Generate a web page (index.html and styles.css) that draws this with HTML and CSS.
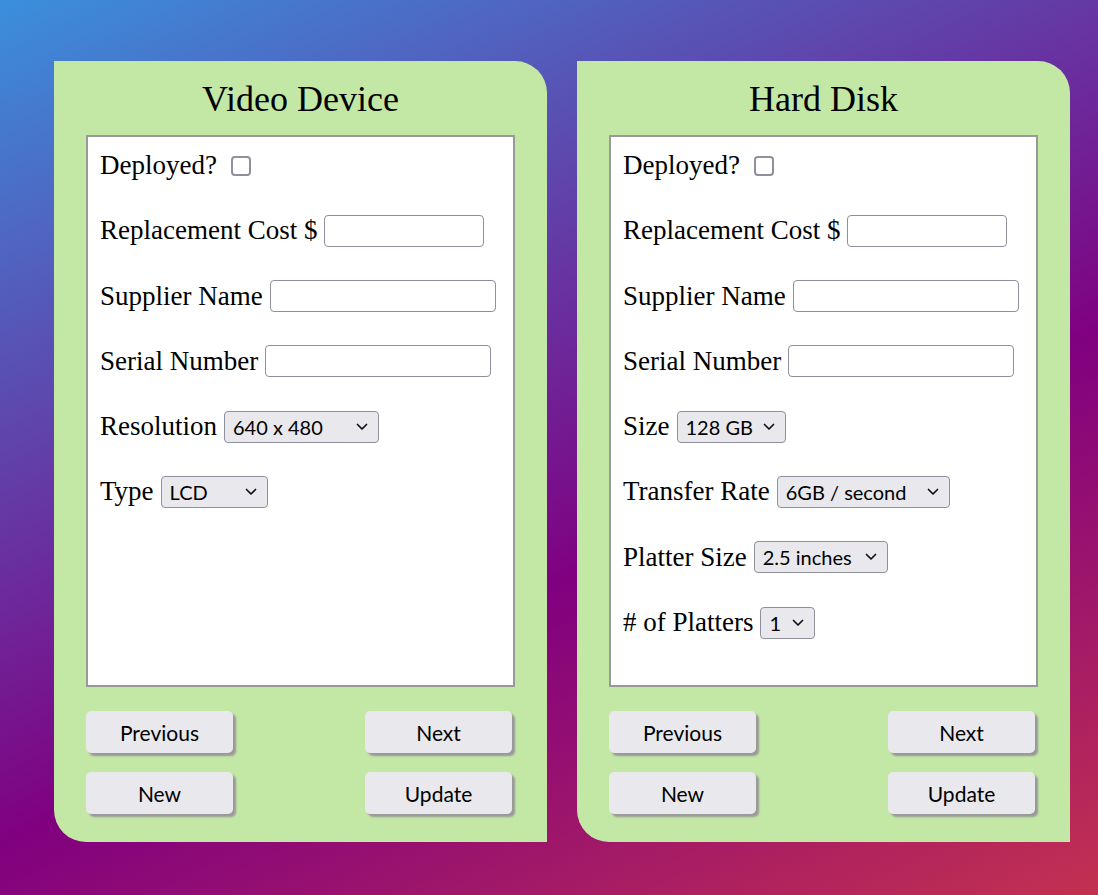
FILE: index.html
```html
<!DOCTYPE html>
<html lang="en">
<head>
<meta charset="utf-8">
<title>Inventory</title>
<link rel="stylesheet" href="styles.css">
</head>
<body>
<main class="page">
  <section class="card">
    <h2 class="card-title">Video Device</h2>
    <div class="panel">
      <div class="row"><label>Deployed?</label><input type="checkbox" class="check"></div>
      <div class="row"><label>Replacement Cost $</label><input type="text" class="field w-cost"></div>
      <div class="row"><label>Supplier Name</label><input type="text" class="field w-long"></div>
      <div class="row"><label>Serial Number</label><input type="text" class="field w-long"></div>
      <div class="row"><label>Resolution</label><select class="sel w-res"><option>640 x 480</option></select></div>
      <div class="row"><label>Type</label><select class="sel w-type"><option>LCD</option></select></div>
    </div>
    <div class="buttons">
      <button class="btn">Previous</button>
      <button class="btn">Next</button>
      <button class="btn">New</button>
      <button class="btn">Update</button>
    </div>
  </section>
  <section class="card">
    <h2 class="card-title">Hard Disk</h2>
    <div class="panel">
      <div class="row"><label>Deployed?</label><input type="checkbox" class="check"></div>
      <div class="row"><label>Replacement Cost $</label><input type="text" class="field w-cost"></div>
      <div class="row"><label>Supplier Name</label><input type="text" class="field w-long"></div>
      <div class="row"><label>Serial Number</label><input type="text" class="field w-long"></div>
      <div class="row"><label>Size</label><select class="sel w-size"><option>128 GB</option></select></div>
      <div class="row"><label>Transfer Rate</label><select class="sel w-rate"><option>6GB / second</option></select></div>
      <div class="row"><label>Platter Size</label><select class="sel w-platter"><option>2.5 inches</option></select></div>
      <div class="row"><label># of Platters</label><select class="sel w-count"><option>1</option></select></div>
    </div>
    <div class="buttons">
      <button class="btn">Previous</button>
      <button class="btn">Next</button>
      <button class="btn">New</button>
      <button class="btn">Update</button>
    </div>
  </section>
</main>
</body>
</html>
```
FILE: styles.css
```css
html {
  min-height: 100%;
  background: linear-gradient(155deg, #3b8fdc 0%, #800080 60%, #c33150 100%);
}
body {
  margin: 0;
  font-family: "Liberation Serif", "Times New Roman", serif;
  color: #000;
}
.page {
  display: flex;
  gap: 30px;
  padding: 61px 0 0 54px;
}
.card {
  box-sizing: border-box;
  width: 493px;
  padding: 16px 32px 28px 32px;
  background: #c3e7a4;
  border-radius: 0 32px 0 32px;
}
.card-title {
  margin: 0;
  font-size: 36px;
  font-weight: normal;
  line-height: 44px;
  text-align: center;
}
.panel {
  box-sizing: border-box;
  margin-top: 14px;
  height: 552px;
  background: #fff;
  border: 2px solid #999;
  padding: 12px 12px 0 12px;
  display: flex;
  flex-direction: column;
  gap: 32.3px;
}
.row {
  display: flex;
  align-items: center;
  gap: 7px;
  height: 33px;
  font-size: 27px;
  white-space: nowrap;
}
.check {
  appearance: none;
  -webkit-appearance: none;
  box-sizing: border-box;
  width: 20px;
  height: 20px;
  margin: 0 0 0 7px;
  border: 2px solid #8f8f9d;
  border-radius: 4px;
  background: #fff;
}
.field {
  box-sizing: border-box;
  height: 32px;
  margin: 0;
  border: 1px solid #8f8f9d;
  border-radius: 4px;
  background: #fff;
  font-family: Lato, sans-serif;
  font-size: 20px;
  padding: 0 6px;
}
.w-cost { width: 160px; }
.w-long { width: 226px; }
.sel {
  appearance: none;
  -webkit-appearance: none;
  box-sizing: border-box;
  height: 32px;
  margin: 0;
  border: 1px solid #8f8f9d;
  border-radius: 4px;
  padding: 0 0 0 8px;
  font-family: Lato, sans-serif;
  font-size: 20px;
  color: #000;
  background-color: #e9e9ed;
  background-image: url("data:image/svg+xml,%3Csvg xmlns='http://www.w3.org/2000/svg' width='12' height='8' viewBox='0 0 12 8'%3E%3Cpath d='M1.5 1.5l4.5 4.5 4.5-4.5' fill='none' stroke='%23111' stroke-width='1.7' stroke-linecap='round' stroke-linejoin='round'/%3E%3C/svg%3E");
  background-repeat: no-repeat;
  background-position: right 10px center;
  background-size: 12px 8px;
}
.w-res { width: 155px; }
.w-type { width: 107px; }
.w-size { width: 109px; }
.w-rate { width: 173px; }
.w-platter { width: 134px; }
.w-count { width: 55px; }
.buttons {
  display: grid;
  grid-template-columns: 147px 147px;
  justify-content: space-between;
  row-gap: 19px;
  margin: 24px 3px 0 0;
}
.btn {
  box-sizing: border-box;
  height: 42px;
  margin: 0;
  border: none;
  border-radius: 5px;
  background: #e9e9ed;
  box-shadow: 3px 3px 2px #999;
  font-family: Lato, sans-serif;
  font-size: 21px;
  color: #000;
  padding: 0;
}
```
